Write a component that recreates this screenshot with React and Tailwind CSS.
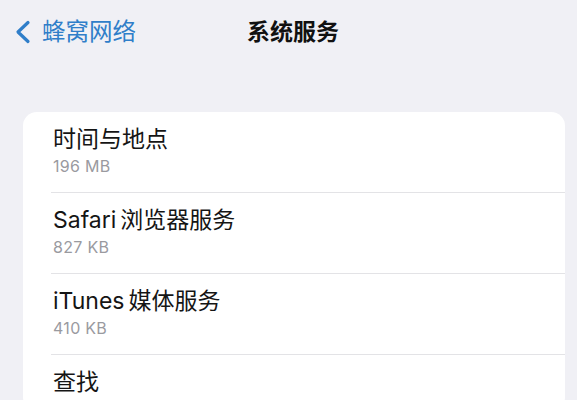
import React from 'react';

const rows = [
    { title: '时间与地点', size: '196 MB' },
    { latin: 'Safari', title: '浏览器服务', size: '827 KB' },
    { latin: 'iTunes', title: '媒体服务', size: '410 KB' },
    { title: '查找', size: '' },
];

const font = { fontFamily: '"Inter", "Noto Sans CJK SC", sans-serif' };

const App = () => {
    return (
        <div className="w-[577px] h-[400px] overflow-hidden bg-[#f0f0f5]" style={font}>
            {/* Nav bar */}
            <div className="h-[64px] flex items-center">
                <div className="flex items-center pl-[14px] text-[#2f7ec9]">
                    <svg width="17" height="24" viewBox="0 0 17 24" fill="none">
                        <path d="M14 2.5 L4 12 L14 21.5" stroke="currentColor" strokeWidth="3.2" strokeLinecap="round" strokeLinejoin="round" />
                    </svg>
                    <span className="ml-[11px] text-[23.5px] leading-[30px]">蜂窝网络</span>
                </div>
                <h1 className="ml-[111px] text-[23px] leading-[30px] font-semibold text-[#111]">系统服务</h1>
            </div>

            {/* Card */}
            <div className="mt-[48px] ml-[23px] mr-[12px] bg-white rounded-[14px] overflow-hidden">
                {rows.map((row, i) => (
                    <div key={row.title}>
                        {i > 0 && <div className="ml-[28px] h-px bg-[#e3e3e6]" />}
                        <div className="pl-[30px] pt-[13px] pb-[15px]">
                            <div className="text-[23px] leading-[28px] text-[#151515]">
                                {row.latin && <span className="mr-[4px]">{row.latin}</span>}
                                {row.title}
                            </div>
                            {row.size && (
                                <div className="mt-[3px] text-[16px] leading-[21px] tracking-[0.3px] text-[#9a9a9f]">{row.size}</div>
                            )}
                        </div>
                    </div>
                ))}
            </div>
        </div>
    );
};

export default App;
